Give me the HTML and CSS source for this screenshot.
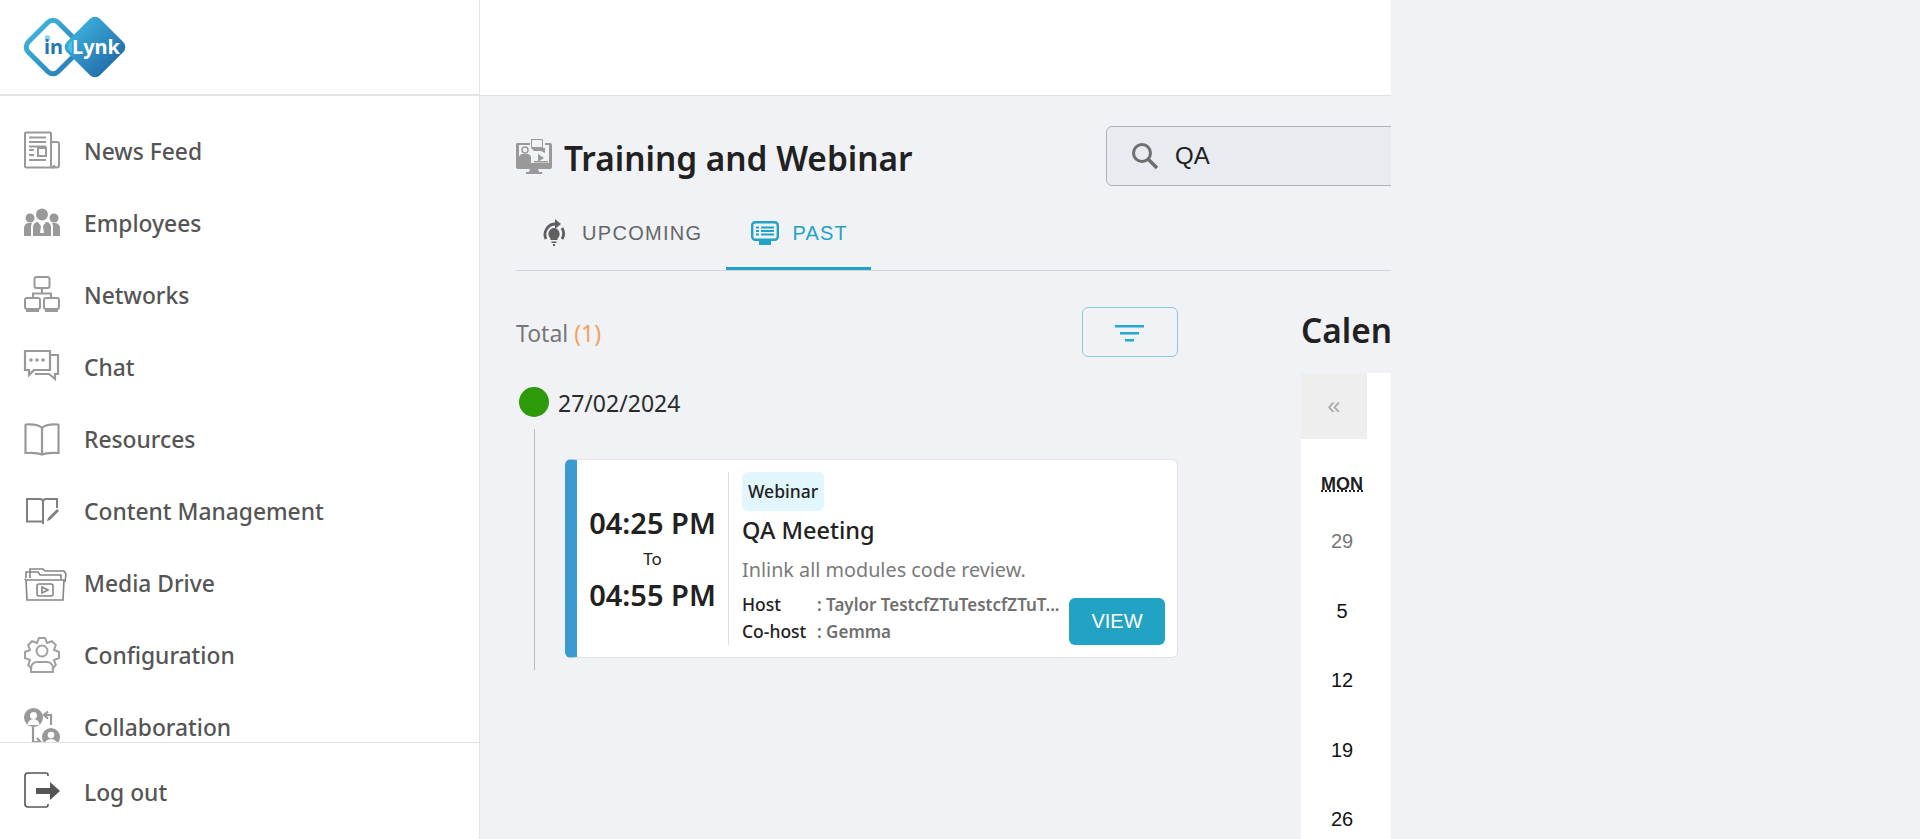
FILE: index.html
```html
<!DOCTYPE html>
<html lang="en">
<head>
<meta charset="utf-8">
<title>Training and Webinar</title>
<link rel="stylesheet" href="styles.css">
</head>
<body>
<div class="app">
  <aside class="sidebar">
    <div class="brand">
      <svg class="logo" width="104" height="60" viewBox="0 0 104 60">
        <defs>
          <linearGradient id="lg2" gradientUnits="userSpaceOnUse" x1="42" x2="102" y1="30" y2="30"><stop offset="0" stop-color="#3cb2dc"/><stop offset="1" stop-color="#2269a8"/></linearGradient>
          <linearGradient id="lg3" gradientUnits="userSpaceOnUse" x1="1" x2="59" y1="30" y2="30"><stop offset="0" stop-color="#3db4de"/><stop offset="1" stop-color="#2a7fb8"/></linearGradient>
        </defs>
        <rect x="9" y="9" width="42" height="42" rx="7" transform="rotate(45 30 30)" fill="#fff" stroke="url(#lg3)" stroke-width="5"/>
        <rect x="48.500" y="6.500" width="47" height="47" rx="7" transform="rotate(45 72 30)" fill="url(#lg2)"/>
        <path d="M49 24a6.500 6.500 0 0 0 0 12z" fill="#4cc0e4"/>
        <circle cx="24.500" cy="21" r="2.800" fill="#8fd2ec"/>
        <text class="logo-in" x="21" y="37">in</text>
        <text class="logo-lynk" x="49" y="37">Lynk</text>
      </svg>
    </div>
    <nav class="nav">
      <a class="nav-item"><svg class="ico" viewBox="0 0 36 36"><g fill="none" stroke="#999" stroke-width="2"><path d="M27 26V-.5a1 1 0 0 0-1-1H2a1 1 0 0 0-1 1V32a1.500 1.500 0 0 0 1.500 1.500H31"/><path d="M27 8h6a2 2 0 0 1 2 2v21a2.500 2.500 0 0 1-5 0M27 26v5a2.500 2.500 0 0 0 2.500 2.500"/><path d="M5 3.500h17M5 8h17M5 26h17M5 12.500h17M5 16h5M5 21h5"/><rect x="14" y="14" width="8" height="8"/></g></svg><span class="nav-label">News Feed</span></a>
      <a class="nav-item"><svg class="ico" viewBox="0 0 36 36"><g fill="#999"><circle cx="18" cy="8.500" r="6"/><circle cx="6" cy="12" r="4.500"/><circle cx="30" cy="12" r="4.500"/><path d="M0 30v-8a5 5 0 0 1 5-5h3a8 8 0 0 0-1 4v9zM36 30v-8a5 5 0 0 0-5-5h-3a8 8 0 0 1 1 4v9zM9 30v-9a5 5 0 0 1 5-5l3 4-1 7h4l-1-7 3-4a5 5 0 0 1 5 5v9z"/></g></svg><span class="nav-label">Employees</span></a>
      <a class="nav-item"><svg class="ico" viewBox="0 0 36 36"><g fill="none" stroke="#999" stroke-width="2"><rect x="10.500" y="-1" width="15" height="11" rx="2"/><path d="M18 10v5M9 20v-4.500h18V20"/><rect x="1" y="20" width="15" height="11" rx="2"/><rect x="20" y="20" width="15" height="11" rx="2"/></g><path d="M2 32h13v2H2zM21 32h13v2H21z" fill="#999"/></svg><span class="nav-label">Networks</span></a>
      <a class="nav-item"><svg class="ico" viewBox="0 0 36 36"><g fill="none" stroke="#999" stroke-width="2.200"><path d="M1 1h25v19H10l-5 5v-5H1z"/><path d="M26 5h8v19h-3v5l-6-5H11"/></g><g fill="#999"><circle cx="7" cy="10" r="1.800"/><circle cx="13" cy="10" r="1.800"/><circle cx="19" cy="10" r="1.800"/></g></svg><span class="nav-label">Chat</span></a>
      <a class="nav-item"><svg class="ico" viewBox="0 0 36 36"><path d="M18 6c-3-3-9-4-16-3.500L1.500 3v28c7-.5 12-.5 16.500 1.500C22.500 30.500 27.500 30.500 34.500 31V3l-.5-.5C27 2 21 3 18 6zM18 6v26" fill="none" stroke="#999" stroke-width="2.200"/></svg><span class="nav-label">Resources</span></a>
      <a class="nav-item"><svg class="ico" viewBox="0 0 36 36"><path d="M19 27.500H3V5h13a3 3 0 0 1 3 3v22M19 8a3 3 0 0 1 3-3h11v9" fill="none" stroke="#808080" stroke-width="2"/><path d="M23 27l1-3L33 15l2 2-9 9z" fill="#808080"/></svg><span class="nav-label">Content Management</span></a>
      <a class="nav-item"><svg class="ico ico-wide" viewBox="0 0 43 36"><g fill="none" stroke="#858585" stroke-width="1.600"><path d="M3 34h36l1-20H2z"/><path d="M1 14a1 1 0 0 1 1-1M2 12V6h12l2 3h21v4M6 12V3h13l2 2h19l2 3-1 8"/><rect x="13" y="18" width="16" height="12" rx="2"/><path d="M18 21v6l6-3z"/></g></svg><span class="nav-label">Media Drive</span></a>
      <a class="nav-item"><svg class="ico" viewBox="0 0 36 36"><g fill="none" stroke="#a0a0a0" stroke-width="2"><path d="M8 31L4.200 27L6 22L1 20V14L6 12L4.200 7L8 3.200L13 5L15 0H21L23 5L28 3.200L31.800 7L30 12L35 14V20L30 22L31.800 27L28 31"/><circle cx="18" cy="13" r="5.500"/><path d="M7 34v-4a6 6 0 0 1 6-6h10a6 6 0 0 1 6 6v4z"/></g></svg><span class="nav-label">Configuration</span></a>
      <a class="nav-item"><svg class="ico" viewBox="0 0 36 36"><g fill="#999"><circle cx="9.500" cy="7.500" r="9.500"/><circle cx="27" cy="27" r="9"/></g><circle cx="9.500" cy="5.500" r="3.500" fill="#fff"/><path d="M3.500 15a6 6 0 0 1 12 0z" fill="#fff"/><circle cx="27" cy="25" r="3.300" fill="#fff"/><path d="M20 36a7 7 0 0 1 14 0z" fill="#fff"/><g fill="none" stroke="#999" stroke-width="2.200"><path d="M27 15V5h-6M24 1.500L20 5l4 3.500"/><path d="M9 17v15h7M13 28l3.500 4-3.500 4"/></g></svg><span class="nav-label">Collaboration</span></a>
    </nav>
    <div class="logout">
      <a class="nav-item nav-item-dark"><svg class="ico" viewBox="0 0 36 36"><path d="M24 1V0a2 2 0 0 0-2-2H4a3 3 0 0 0-3 3v28a3 3 0 0 0 3 3h18a2 2 0 0 0 2-2v-1" fill="none" stroke="#555" stroke-width="1.600"/><path d="M12 13h14V7l10 9-10 9v-6H12z" fill="#555"/></svg><span class="nav-label">Log out</span></a>
    </div>
  </aside>
  <main class="main">
    <header class="topbar"></header>
    <div class="content">
      <div class="title-row">
        <div class="title-wrap">
          <svg class="title-ico" viewBox="0 0 36 36"><path d="M1 5h13v2H3v18h30V7h-4V5h5a2 2 0 0 1 2 2v21a2 2 0 0 1-2 2H2a2 2 0 0 1-2-2V6z" fill="#999"/><path d="M0 26h36v3a2 2 0 0 1-2 2H2a2 2 0 0 1-2-2zM14 31h8l1 3h3v2H10v-2h3z" fill="#999"/><path d="M15 1h11a1 1 0 0 1 1 1v8h2v5l-4-2H18l-3-3zM16 2v7h10V2z" fill="#999"/><circle cx="9" cy="12" r="3" fill="none" stroke="#999" stroke-width="1.500"/><path d="M3 25v-6a4 4 0 0 1 3-3h6a4 4 0 0 1 3 3v6zM22 16l6 4-6 4zM18 23h14v1.500H18z" fill="#999"/></svg>
          <h1 class="title">Training and Webinar</h1>
        </div>
        <div class="search">
          <svg class="search-ico" width="28" height="28" viewBox="0 0 28 28"><circle cx="11" cy="11" r="8.500" fill="none" stroke="#6e6e6e" stroke-width="3"/><path d="M17 17l9 9" stroke="#6e6e6e" stroke-width="3.500"/></svg>
          <span class="search-text">QA</span>
        </div>
      </div>
      <div class="tabs">
        <div class="tab">
          <svg width="24" height="28" viewBox="0 0 24 28"><path d="M4 20A10.500 10.500 0 0 1 14 5M20 9a10.500 10.500 0 0 1 0 11" fill="none" stroke="#5f5f5f" stroke-width="2.800"/><path d="M13 0l6 5-6 5z" fill="#5f5f5f"/><path d="M12 9a6 6 0 0 1 3.500 10.500V21h-7v-1.500A6 6 0 0 1 12 9zM9.500 22.500h5V24h-5zM11 25h2v2h-2z" fill="#5f5f5f"/></svg>
          <span>UPCOMING</span>
        </div>
        <div class="tab tab-active">
          <svg width="28" height="24" viewBox="0 0 28 24"><rect x="1.200" y="1.200" width="25.600" height="17.600" rx="3" fill="none" stroke="#23a3c4" stroke-width="2.400"/><path d="M8 20h12v4H8z" fill="#23a3c4"/><path d="M5 5.500h3v2H5zM10 5.500h13v2H10zM5 9h3v2H5zM10 9h13v2H10zM5 12.500h3v2H5zM10 12.500h13v2H10z" fill="#23a3c4"/></svg>
          <span>PAST</span>
        </div>
      </div>
      <div class="columns">
        <section class="list">
          <div class="list-head">
            <div class="total">Total <span class="count">(1)</span></div>
            <button class="filter"><svg width="30" height="18" viewBox="0 0 30 18"><path d="M0 0h29v2.500H0zM5 7h19v2.500H5zM10 14h9v2.500h-9z" fill="#23a8cf"/></svg></button>
          </div>
          <div class="date-row"><span class="dot"></span><span class="date">27/02/2024</span></div>
          <div class="timeline">
            <article class="card">
              <div class="times">
                <div class="time">04:25 PM</div>
                <div class="to">To</div>
                <div class="time">04:55 PM</div>
              </div>
              <div class="info">
                <span class="tag">Webinar</span>
                <h2 class="meeting">QA Meeting</h2>
                <p class="desc">Inlink all modules code review.</p>
                <div class="bottom">
                  <dl class="people">
                    <dt>Host</dt><dd>: Taylor TestcfZTuTestcfZTuT...</dd>
                    <dt>Co-host</dt><dd>: Gemma</dd>
                  </dl>
                  <button class="view">VIEW</button>
                </div>
              </div>
            </article>
          </div>
        </section>
        <section class="calendar">
          <h2 class="cal-title">Calendar</h2>
          <div class="cal-table">
            <div class="cal-prev">«</div>
            <div class="cal-head">MON</div>
            <div class="cal-day cal-muted">29</div>
            <div class="cal-day">5</div>
            <div class="cal-day">12</div>
            <div class="cal-day">19</div>
            <div class="cal-day">26</div>
          </div>
        </section>
      </div>
    </div>
  </main>
</div>
</body>
</html>
```
FILE: styles.css
```css
* { box-sizing: border-box; }
html, body { margin: 0; height: 100%; overflow: hidden; }
body { background: #f0f2f6; font-family: "Noto Sans", "Open Sans", sans-serif; color: #212121; }
.app { display: flex; height: 839px; }

.sidebar { width: 480px; flex: none; background: #fff; border-right: 1px solid #e4e4e4; display: flex; flex-direction: column; height: 839px; }
.brand { height: 96px; flex: none; border-bottom: 2px solid #e4e4e4; padding: 17px 0 0 23px; }
.logo { display: block; overflow: visible; }
.logo-in { font: 700 20px "Noto Sans", sans-serif; fill: #1f78b4; }
.logo-lynk { font: 700 20px "Noto Sans", sans-serif; fill: #fff; }
.nav { flex: 1; overflow: hidden; padding-top: 20px; }
.nav-item { display: flex; align-items: center; gap: 24px; height: 72px; padding-left: 24px; font-size: 22.800px; font-weight: 500; color: #555; }
.nav-label { padding-bottom: 2px; }
.ico { width: 36px; height: 36px; flex: none; overflow: visible; }
.ico-wide { width: 43px; margin-right: -7px; }
.logout { height: 97px; flex: none; border-top: 1px solid #e0e0e0; padding-top: 14px; }

.main { width: 911px; flex: none; overflow: hidden; }
.topbar { height: 96px; background: #fff; border-bottom: 1px solid #e0e0e0; }
.content { width: 1500px; padding: 30px 0 0 36px; }
.title-row { display: flex; height: 60px; }
.title-wrap { width: 590px; display: flex; align-items: center; gap: 12px; }
.title-ico { width: 36px; height: 36px; flex: none; }
.title { margin: 3px 0 0; font-size: 33.400px; font-weight: 600; color: #212121; }
.search { width: 500px; height: 60px; background: #e8ebf0; border: 1px solid #b0b2b6; border-radius: 6px; display: flex; align-items: center; gap: 16px; padding-left: 24px; }
.search-text { font: 24px "Liberation Sans", sans-serif; color: #212121; }

.tabs { width: 876px; height: 75px; margin-top: 10px; display: flex; border-bottom: 1px solid #d2d4d9; }
.tab { display: flex; align-items: center; gap: 16px; padding: 0 24px 0 26px; height: 74px; font: 20px "Liberation Sans", sans-serif; letter-spacing: 1.300px; color: #666; }
.tab-active { color: #23a3c4; border-bottom: 3px solid #23a3c4; padding: 3px 23px 0 25px; gap: 13px; letter-spacing: 1.200px; }

.columns { display: flex; gap: 123px; margin-top: 36px; align-items: flex-start; }
.list { width: 662px; flex: none; }
.list-head { display: flex; justify-content: space-between; align-items: center; height: 50px; }
.total { font-size: 23px; color: #777; padding-top: 1px; }
.count { color: #f5a15f; }
.filter { width: 96px; height: 50px; background: transparent; border: 1px solid #87cbe0; border-radius: 6px; padding: 3px 0 0; display: flex; align-items: center; justify-content: center; }
.date-row { display: flex; align-items: center; gap: 9px; margin: 30px 0 0 3px; height: 30px; }
.dot { width: 30px; height: 30px; border-radius: 50%; background: #2e9a0a; }
.date { font-size: 23px; color: #2b2b2b; padding-top: 1px; }
.timeline { margin: 12px 0 0 18px; padding: 30px 0 12px 30px; border-left: 1px solid #bdbdbd; }
.card { height: 199px; background: #fff; border: 1px solid #e3e3e3; border-left: 12px solid #3b9ad2; border-radius: 6px; display: flex; padding: 12px 12px 12px 0; }
.times { width: 152px; flex: none; border-right: 1px solid #dedede; display: flex; flex-direction: column; align-items: center; justify-content: center; }
.time { font-size: 29px; font-weight: 600; line-height: 38px; color: #212121; }
.to { font-size: 17px; line-height: 34px; color: #212121; }
.info { flex: 1; padding-left: 13px; min-width: 0; position: relative; }
.tag { display: inline-block; background: #e1f6fd; border-radius: 6px; height: 39px; line-height: 39px; padding: 0 6px; font-size: 17.500px; font-weight: 500; color: #212121; }
.meeting { margin: 1px 0 0; font-size: 23.500px; font-weight: 500; line-height: 36px; color: #212121; }
.desc { margin: 7px 0 0; font-size: 19.800px; line-height: 30px; color: #7a7a7a; }
.bottom { position: absolute; left: 13px; right: 0; bottom: 0; display: flex; justify-content: space-between; align-items: flex-end; }
.people { margin: 0; display: grid; grid-template-columns: 75px 1fr; font-size: 17px; line-height: 27px; }
.people dt { color: #212121; font-size: 17.500px; font-weight: 500; }
.people dd { margin: 0; color: #707070; font-weight: 600; }
.view { width: 96px; height: 47px; border: 0; border-radius: 6px; background: #23a3c4; color: #fff; font: 20px "Liberation Sans", sans-serif; }

.calendar { width: 500px; flex: none; }
.cal-title { margin: 0; height: 66px; line-height: 46px; font-size: 33.400px; font-weight: 600; color: #212121; }
.cal-table { background: #fff; height: 600px; font-family: "Liberation Sans", sans-serif; width: 500px; }
.cal-prev { width: 66px; height: 66px; background: #eee; color: #aaa; font-size: 24px; text-align: center; line-height: 66px; }
.cal-head { width: 82px; height: 45px; margin-top: 23px; text-align: center; font-size: 18px; font-weight: 700; line-height: 45px; text-decoration: underline dotted; color: #212121; }
.cal-day { width: 82px; height: 69.500px; line-height: 69.500px; text-align: center; font-size: 20px; color: #111; }
.cal-muted { color: #777; }
```
